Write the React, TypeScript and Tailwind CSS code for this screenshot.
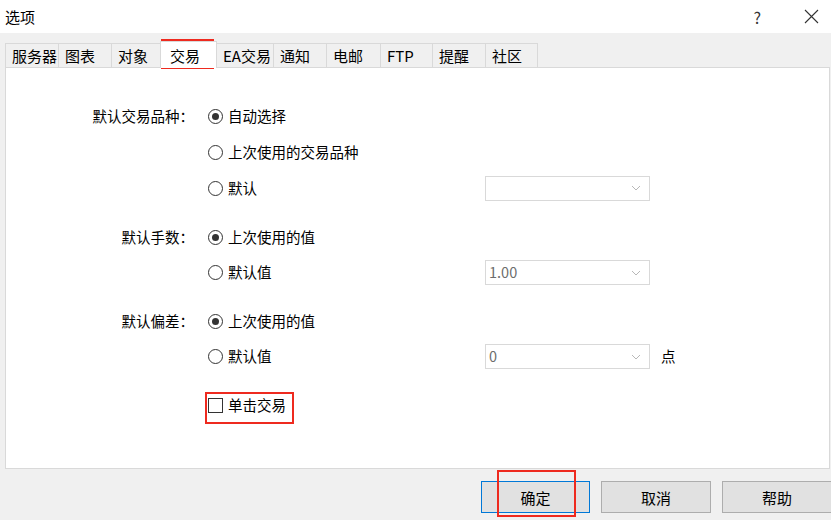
import clsx from 'clsx';

const font = "font-['Noto_Sans_CJK_SC','Microsoft_YaHei',sans-serif]";

const tabs = [
    { label: '服务器', w: 'w-[54px]' },
    { label: '图表', w: 'w-[53px]' },
    { label: '对象', w: 'w-[49px]' },
    { label: '交易', w: 'w-[57px]', active: true },
    { label: 'EA交易', w: 'w-[57px]' },
    { label: '通知', w: 'w-[53px]' },
    { label: '电邮', w: 'w-[54px]' },
    { label: 'FTP', w: 'w-[52px]' },
    { label: '提醒', w: 'w-[53px]' },
    { label: '社区', w: 'w-[52px]' },
];

function Radio({ checked, label }: { checked?: boolean; label: string }) {
    return (
        <div className="flex items-center gap-[5px]">
            <span className="flex h-[15px] w-[15px] items-center justify-center rounded-full border border-[#333333] bg-white">
                {checked && <span className="h-[7px] w-[7px] rounded-full bg-[#333333]" />}
            </span>
            <span>{label}</span>
        </div>
    );
}

function Combo({ value }: { value?: string }) {
    return (
        <div className="flex h-[25px] w-[165px] items-center justify-between border border-[#d9d9d9] bg-white pl-[3px] pr-[8px] text-[#6d6d6d]">
            <span>{value}</span>
            <svg width="10" height="6" viewBox="0 0 10 6" fill="none" stroke="#b8b8b8" strokeWidth="1">
                <path d="M1 1l4 4 4-4" />
            </svg>
        </div>
    );
}

function Row({ label, children, right, h = 'h-[35px]' }: { label?: string; children: React.ReactNode; right?: React.ReactNode; h?: string }) {
    return (
        <div className={clsx('flex items-center', h)}>
            <div className="w-[188px] text-right">{label}</div>
            <div className="ml-[14px] w-[277px]">{children}</div>
            {right}
        </div>
    );
}

export default function App() {
    return (
        <div className={clsx('relative flex h-[520px] w-[831px] flex-col overflow-hidden bg-[#f0f0f0] text-[14.5px] leading-none text-black', font)}>
            {/* title bar */}
            <div className="flex h-[33px] items-center bg-white pl-[5px]">
                <span className="text-[15px]">选项</span>
                <span className="ml-auto mr-[43px] text-[16px] text-[#333]">?</span>
                <svg className="mr-[12px]" width="15" height="15" viewBox="0 0 15 15" stroke="#333" strokeWidth="1.1">
                    <path d="M1 1l13 13M14 1L1 14" />
                </svg>
            </div>

            {/* tabs */}
            <div className="mt-[8px] flex h-[26px] items-end pl-[5px] text-[15px]">
                {tabs.map((t, i) =>
                    t.active ? (
                        <div key={t.label} className={clsx('relative z-10 -mb-px -ml-px flex h-[27px] items-center border border-b-0 border-[#d9d9d9] bg-white pl-[9px]', t.w)}>
                            {t.label}
                        </div>
                    ) : (
                        <div key={t.label} className={clsx('flex h-[24px] items-center border-t border-r border-[#d9d9d9] bg-[#f0f0f0] pl-[6px]', i === 0 && 'border-l', t.w)}>
                            {t.label}
                        </div>
                    )
                )}
            </div>

            {/* panel */}
            <div className="ml-[5px] h-[402px] w-[825px] border border-[#d9d9d9] bg-white pt-[30px]">
                <Row label="默认交易品种：" h="h-[36px]">
                    <Radio checked label="自动选择" />
                </Row>
                <Row h="h-[36px]">
                    <Radio label="上次使用的交易品种" />
                </Row>
                <Row h="h-[36px]" right={<Combo />}>
                    <Radio label="默认" />
                </Row>

                <div className="mt-[14px]">
                    <Row label="默认手数：">
                        <Radio checked label="上次使用的值" />
                    </Row>
                    <Row right={<Combo value="1.00" />}>
                        <Radio label="默认值" />
                    </Row>
                </div>

                <div className="mt-[14px]">
                    <Row label="默认偏差：">
                        <Radio checked label="上次使用的值" />
                    </Row>
                    <Row right={<><Combo value="0" /><span className="ml-[11px]">点</span></>}>
                        <Radio label="默认值" />
                    </Row>
                </div>

                <div className="mt-[14px]">
                    <Row>
                        <div className="flex items-center gap-[5px]">
                            <span className="h-[15px] w-[15px] border border-[#333333] bg-white" />
                            <span>单击交易</span>
                        </div>
                    </Row>
                </div>
            </div>

            {/* buttons */}
            <div className="mt-[12px] flex justify-end gap-[11px] text-[15px]">
                <button className="h-[32px] w-[109px] border border-[#0078d7] bg-[#e1e1e1]">确定</button>
                <button className="h-[32px] w-[110px] border border-[#adadad] bg-[#e1e1e1]">取消</button>
                <button className="-mr-px h-[32px] w-[110px] border border-[#adadad] bg-[#e1e1e1]">帮助</button>
            </div>

            {/* red annotation boxes */}
            <div className="absolute left-[161px] top-[39px] h-[30px] w-[53px] border-2 border-[#ee2a1f]" />
            <div className="absolute left-[205px] top-[392px] h-[32px] w-[89px] border-2 border-[#ee2a1f]" />
            <div className="absolute left-[497px] top-[470px] h-[47px] w-[79px] border-2 border-[#ee2a1f]" />
        </div>
    );
}
